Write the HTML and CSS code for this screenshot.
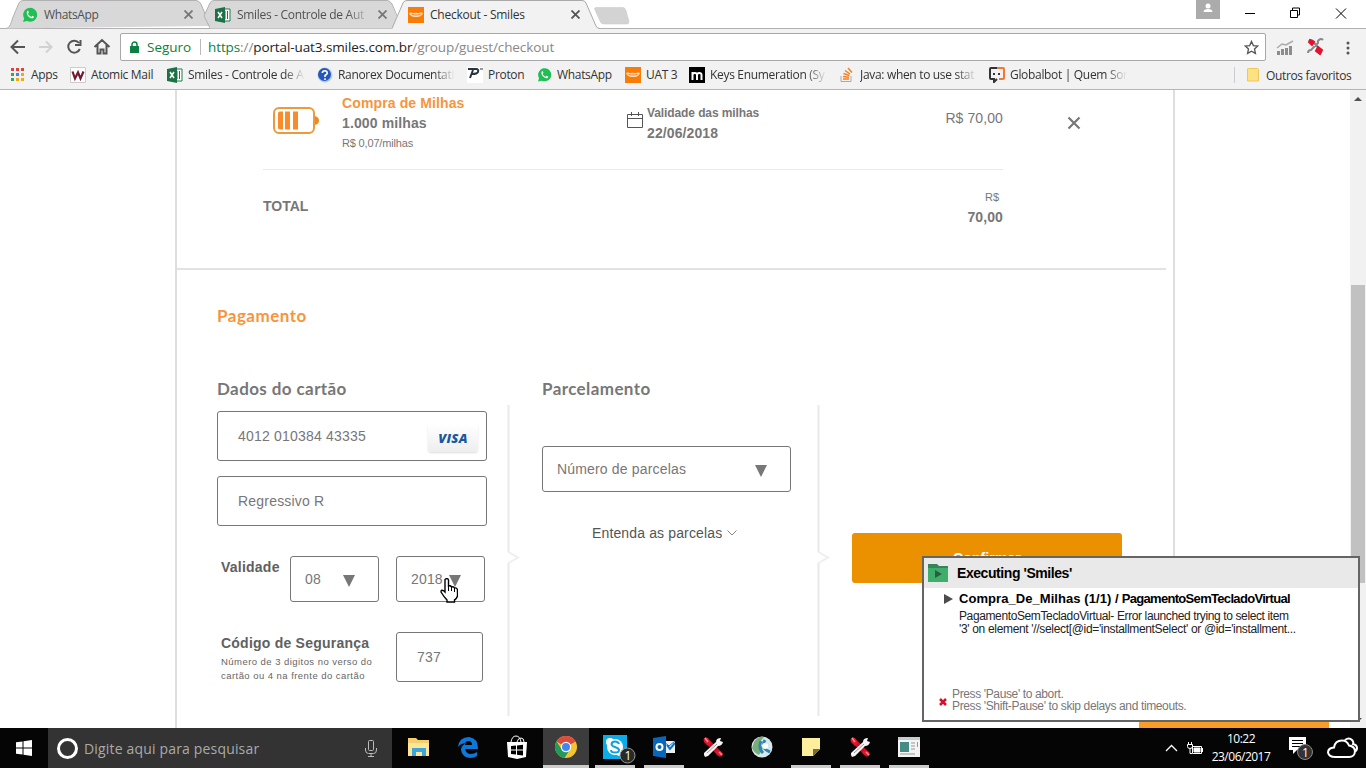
FILE: index.html
```html
<!DOCTYPE html>
<html lang="pt-BR">
<head>
<meta charset="utf-8">
<title>Checkout - Smiles</title>
<link rel="stylesheet" href="styles.css">
</head>
<body>
<svg width="0" height="0" class="defs">
  <symbol id="whats" viewBox="0 0 16 16"><path d="M1 15l1.200-3.600A7 7 0 1 1 5 14z" fill="#20bf55"/><path d="M5.100 4.200c.7-.7 1.300-.3 1.700 1.300L6 6.800C6.700 8.300 7.700 9.200 9.200 9.900l1.100-1.100c1.800.6 2 1.100 1.200 2C9.300 13 3.300 8 5.100 4.200z" fill="#fff"/></symbol>
  <symbol id="excel" viewBox="0 0 16 16"><path d="M8 2h7v12H8z" fill="#fff" stroke="#207a4b"/><path d="M10 4v8M12.500 4v8" stroke="#207a4b"/><path d="M0 2l10-2v16L0 14z" fill="#1d7245"/><path d="M3 5l4 6M7 5l-4 6" stroke="#fff" stroke-width="1.500"/></symbol>
  <symbol id="smile" viewBox="0 0 16 16"><path d="M0 0h16v16H0z" fill="#f97b08"/><path d="M1 6c2-1.500 3.500.5 5 0s2-.5 3.500 0S13 4.500 15 6c-1 2.500-2.500 4-7 4S2 8.500 1 6z" fill="#ffdcb5"/><path d="M3.500 7.300c3 1 6 1 9 0" stroke="#f58a2b" fill="none"/></symbol>
  <symbol id="folder" viewBox="0 0 22 20"><path d="M0 1h8l2 2h11v16H0z" fill="#f5cf6b"/><path d="M0 6h21v13H0z" fill="#ffe596"/><path d="M4 19v-8h14v8h-4v-4H8v4z" fill="#39a5dd"/></symbol>
  <symbol id="ranorex" viewBox="0 0 22 22"><path d="M4 4l14 14" stroke="#cf0c22" stroke-width="5" stroke-linecap="round"/><path d="M2 3q1-2 4-1l3 5-3 3-4-4zM16 14l4 2q2 3-1 4l-4-1-2-3z" fill="#e3152c"/><path d="M3 2l3 4M17 16l3 3" stroke="#ff8a93" stroke-width="1.500"/><path d="M2 17L14 6q0-4 5-4l-1 3 3 1q-1 4-5 4L6 20l-3 1-1-2z" fill="#f4f4f4"/><path d="M5 17L15 8" stroke="#999"/></symbol>
</svg>

<div class="screen">
  <header class="tabs">
    <div class="tab t1"><svg class="shape" width="206" height="29"><path d="M0 28.500C4 28 5 23 7 17L13 3Q14 .5 17 .5H190Q193 .5 195 4L204 26" fill="#d8d8d8" stroke="#b1b1b1"/></svg><svg width="16" height="16"><use href="#whats"/></svg><span class="name">WhatsApp</span><svg class="x" width="9" height="9"><path d="M.5.5l8 8M8.500.5l-8 8"/></svg></div>
    <div class="tab t2"><svg class="shape" width="206" height="29"><path d="M1 16L7 3Q8 .5 11 .5H184Q187 .5 189 4L198 28.500H8z" fill="#d8d8d8"/><path d="M1 16L7 3Q8 .5 11 .5H184Q187 .5 189 4L195 18M1 16L7 28" fill="none" stroke="#b1b1b1"/></svg><svg width="16" height="16"><use href="#excel"/></svg><span class="name fade">Smiles - Controle de Aut</span><svg class="x" width="9" height="9"><path d="M.5.5l8 8M8.500.5l-8 8"/></svg></div>
    <div class="tab t3"><svg class="shape" width="208" height="30"><path d="M0 29V28.500L11 3Q12 .5 15 .5H190Q193 .5 194 3L204 26Q205 28.500 208 28.500V30H0z" fill="#f2f2f2"/><path d="M0 28.500L11 3Q12 .5 15 .5H190Q193 .5 194 3L204 26Q205 28.500 208 28.500" fill="none" stroke="#a9a9a9"/></svg><svg width="16" height="16"><use href="#smile"/></svg><span class="name">Checkout - Smiles</span><svg class="x dark" width="9" height="9"><path d="M.5.5l8 8M8.500.5l-8 8"/></svg></div>
    <svg class="newtab" width="36" height="18"><path d="M2 .5h27q2 0 3 3l3 11q0 2.500-2 2.500H10q-3 0-4-3L1 3Q0 .5 2 .5z" fill="#d3d3d3" stroke="#c6c6c6" stroke-width=".5"/></svg>
    <div class="winctl"><svg class="person" width="24" height="19"><path d="M0 0h24v19H0z" fill="#ababab"/><circle cx="12" cy="6" r="2.500" fill="#fff"/><path d="M7.500 12q0-3 4.500-3t4.500 3z" fill="#fff"/></svg><svg width="120" height="28" fill="none" stroke="#000"><path d="M13 13.500h10M58.500 10.500h7v7h-7zM60.500 10v-2h7v7h-2M104 8.500l10 10M114 8.500l-10 10"/></svg></div>
  </header>

  <div class="toolbar">
    <svg width="120" height="34" fill="none" stroke="#555" stroke-width="2"><path d="M25 18H12M18 11.500L11.500 18l6.500 6.500"/><path d="M39 18h12M46 12.500l5.500 5.500-5.500 5.500" stroke="#d2d2d2"/><path d="M79 14A6 6 0 1 0 79.800 20M80.500 11v5h-5.500"/><path d="M94.500 18L102 11l7.500 7M97.500 16v8.500h3v-4h3v4h3V16"/></svg>
    <div class="omnibox"><svg width="10" height="13"><path d="M0 5h9v7H0z" fill="#0b8043"/><path d="M2 6V3.500a2.500 2.500 0 0 1 5 0V6" fill="none" stroke="#0b8043" stroke-width="1.500"/></svg><span class="secure">Seguro</span><i></i><span class="url"><b class="g">https</b><b>://</b>portal-uat3.smiles.com.br<b>/group/guest/checkout</b></span><svg class="star" width="15" height="15" viewBox="0 0 16 16"><path d="M8 1.500l2 4.400 4.700.5-3.500 3.200 1 4.700L8 11.900l-4.200 2.400 1-4.700L1.300 6.400 6 5.900z" fill="none" stroke="#555" stroke-width="1.400"/></svg></div>
    <svg class="ext" width="100" height="32"><path d="M11 26v-4h3v4zM15 26v-6h3v6zM19 26v-7h3v7zM23 26v-9h3v9z" fill="#8d8d8d"/><path d="M11 19l5-4 4 1 7-4" fill="none" stroke="#aaa" stroke-width="1.500"/><g transform="translate(3 1)"><path d="M40 11a3 3 0 0 1 5 2l7 7a3 3 0 0 1-2 4M54 10a3 3 0 0 0-5 3l-7 7a3 3 0 0 0-3 3" fill="none" stroke="#888" stroke-width="2"/><path d="M41 10l4 2-2 3-3-3zM49 17l4 3-2 4-4-3z" stroke="#e2132c" stroke-width="2" fill="#e2132c"/></g><circle cx="82" cy="14" r="1.500"/><circle cx="82" cy="19" r="1.500"/><circle cx="82" cy="24" r="1.500"/></svg>
  </div>

  <nav class="bookmarks">
    <div><svg width="16" height="16"><path d="M1 1h3v3H1zM6 1h3v3H6zM11 1h3v3h-3z" fill="#db4437"/><path d="M1 6h3v3H1z" fill="#3aa757"/><path d="M6 6h3v3H6z" fill="#4285f4"/><path d="M11 6h3v3h-3zM6 11h3v3H6zM11 11h3v3h-3z" fill="#f2a813"/><path d="M1 11h3v3H1z" fill="#3aa757"/></svg><span>Apps</span></div>
    <div><svg width="16" height="16"><path d="M.5.5h15v15H.5z" fill="#fff" stroke="#ccc"/><path d="M2.500 4.500l2.500 7 3-6 2.500 6 3-7" fill="none" stroke="#741a30" stroke-width="2.200"/></svg><span>Atomic Mail</span></div>
    <div><svg width="16" height="16"><use href="#excel"/></svg><span class="fade">Smiles - Controle de A</span></div>
    <div><svg width="16" height="16"><circle cx="8" cy="8" r="7.500" fill="#b6cbe8"/><circle cx="7.500" cy="7.500" r="6.500" fill="#2558bd"/><path d="M5.300 6q.2-2.300 2.500-2.300T10.300 6q0 1.200-2.300 2.500v1.500M8 11.300v1.700" stroke="#fff" fill="none" stroke-width="1.600"/></svg><span class="fade">Ranorex Documentati</span></div>
    <div><svg width="16" height="16"><path d="M0 0h16v16H0z" fill="#fff"/><path d="M1 2h8q3 0 2 3-1 2-6 2M6 3L3 11" fill="none" stroke="#29323e" stroke-width="2"/><path d="M13 2h3" stroke="#29323e"/></svg><span>Proton</span></div>
    <div><svg width="15" height="16"><use href="#whats"/></svg><span>WhatsApp</span></div>
    <div><svg width="16" height="16"><use href="#smile"/></svg><span>UAT 3</span></div>
    <div><svg width="16" height="16"><path d="M0 0h16v16H0z"/><path d="M3.500 13V5M3.500 8q0-2 2.300-2T8 8v5M8 8q0-2 2.300-2t2.200 2v5" stroke="#fff" stroke-width="2" fill="none"/></svg><span class="fade">Keys Enumeration (Sy</span></div>
    <div><svg width="16" height="16" fill="none"><path d="M2 9v5.500h10V9" stroke="#aaa"/><path d="M4 12h6M4 9.500l6 .7M4.500 6.500l6 2M6 3.500l5 3.500M9 1l4 4.500" stroke="#f48024" stroke-width="1.500"/></svg><span class="fade">Java: when to use stat</span></div>
    <div><svg width="16" height="16" fill="none" stroke-width="2"><path d="M8 1H2q-1 0-1 1v9q0 1 1 1h3v3l3-3" stroke="#333"/><path d="M8 1h6q1 0 1 1v9q0 1-1 1h-4" stroke="#ef7935"/><path d="M4 7h2M9 7h2" stroke="#334"/></svg><span class="fade">Globalbot | Quem Son</span></div>
    <div class="other"><svg width="12" height="14"><path d="M.5 1q0-.5 1-.5h9q1 0 1 1V13H.5z" fill="#fde182" stroke="#edc75a"/></svg><span>Outros favoritos</span></div>
  </nav>

  <main class="viewport">
    <div class="page">
      <section class="product">
        <svg class="battery" width="46" height="28"><rect x="1" y="1" width="40" height="25" rx="5" fill="none" stroke="#ed9a3a" stroke-width="2"/><path d="M42 9q4 1 4 4.500T42 18z" fill="#ed8b1c"/><path d="M7 4.500h3v18H7q-2 0-2-2v-14q0-2 2-2zM12 4.500h5v18h-5zM20 4.500h5v18h-5z" fill="#f98b2b"/></svg>
        <div class="info"><strong class="orange">Compra de Milhas</strong><strong>1.000 milhas</strong><small>R$ 0,07/milhas</small></div>
        <div class="date"><svg width="16" height="18" fill="none" stroke="#555"><path d="M.5 3.500h15v13H.5zM.5 7.500h15M4.500 1v4M11.500 1v4"/></svg><div><b>Validade das milhas</b><strong>22/06/2018</strong></div></div>
        <span class="price">R$ 70,00</span>
        <svg class="remove" width="14" height="14"><path d="M1.500 1.500l11 11M12.500 1.500l-11 11" stroke="#777" stroke-width="2.200"/></svg>
      </section>
      <section class="total"><strong>TOTAL</strong><div><small>R$</small><b>70,00</b></div></section>
      <section class="payment">
        <h2>Pagamento</h2>
        <div class="columns">
          <div class="carddata">
            <h3>Dados do cartão</h3>
            <div class="field">4012 010384 43335<span class="visa">VISA</span></div>
            <div class="field">Regressivo R</div>
            <div class="validity"><label>Validade</label><div class="select">08<i class="arrow"></i></div><div class="select">2018<i class="arrow"></i></div></div>
            <div class="security"><div><label>Código de Segurança</label><p>Número de 3 digitos no verso do<br>cartão ou 4 na frente do cartão</p></div><div class="field code">737</div></div>
          </div>
          <svg class="split" width="14" height="312" fill="none"><path d="M1.500 0v147M1.500 158v153" stroke="#e9e9e9" stroke-width="2"/><path d="M1.500 147l9.500 5.500-9.500 5.500" stroke="#eee" stroke-width="2"/></svg>
          <div class="installments"><h3>Parcelamento</h3><div class="select wide">Número de parcelas<i class="arrow"></i></div><p>Entenda as parcelas <svg width="10" height="6"><path d="M.5.5L5 5 9.500.5" fill="none" stroke="#888"/></svg></p></div>
          <svg class="split" width="14" height="312" fill="none"><path d="M1.500 0v147M1.500 158v153" stroke="#e9e9e9" stroke-width="2"/><path d="M1.500 147l9.500 5.500-9.500 5.500" stroke="#eee" stroke-width="2"/></svg>
          <button class="confirm">Confirmar</button>
        </div>
      </section>
    </div>
    <div class="scroll"><svg width="16" height="16"><path d="M4 11l4-4 4 4z" fill="#505050"/></svg><i class="thumb"></i><svg width="16" height="16"><path d="M4 6l4 4 4-4z" fill="#505050"/></svg></div>
  </main>

  <footer class="taskbar">
    <svg class="start" width="16" height="16"><path d="M0 2.300L6.500 1.400V7.500H0zM7.500 1.200L16 0v7.500H7.500zM0 8.500h6.500v6.100L0 13.700zM7.500 8.500H16V16l-8.500-1.200z" fill="#fff"/></svg>
    <div class="search"><i></i><span>Digite aqui para pesquisar</span><svg width="12" height="17" fill="none" stroke="#bbb"><rect x="3.500" y=".5" width="5" height="10" rx="1"/><path d="M.5 8v2q0 3.500 3 3.500h5q3 0 3-3.500V8M6 13.500V16M3 16.500h6"/></svg></div>
    <div class="apps">
      <div><svg width="22" height="20"><use href="#folder"/></svg></div>
      <div><svg width="22" height="22"><path d="M1 11Q2 1 12 1q9 1 9 12H8q1 5 6 5 3 0 6-2v4q-3 2-7 2-8-1-9-8 0-5 6-7-6 0-9 4zM8 9h7q0-4-3.500-4T8 9z" fill="#0d78d6"/></svg></div>
      <div><svg width="22" height="24"><path d="M1 7h20l-1 15-9 2-9-2z" fill="#fff"/><path d="M5 7q1-6 5-6t5 6M11 7q1-4 4-4t3 4" fill="none" stroke="#fff"/><path d="M5 11l5-.5v4H5zM11 10.400l6-.6v4.700h-6zM5 15.500h5v4l-5-.5zM11 15.500h6v5l-6-.7z"/></svg></div>
      <div class="on active"><svg width="22" height="22" viewBox="0 0 22 22"><circle cx="11" cy="11" r="11" fill="#f4c430"/><path d="M11 11L1.500 5.500A11 11 0 0 1 20.500 5.500z" fill="#dd4b3e"/><path d="M1.500 5.500A11 11 0 0 0 9.500 22L15 13.500 11 11 6.500 13z" fill="#24995b"/><path d="M11 5.500h9.500L15 8z" fill="#dd4b3e"/><circle cx="11" cy="11" r="5.200" fill="#fff"/><circle cx="11" cy="11" r="4" fill="#4285f4"/></svg></div>
      <div class="on"><svg width="33" height="29" class="skype"><path d="M0 0h24v24H0z" fill="#0caceb"/><circle cx="12" cy="12" r="8" fill="#fff"/><circle cx="7" cy="7" r="4" fill="#fff"/><circle cx="17" cy="17" r="4" fill="#fff"/><path d="M16 9q-1-2.500-4-2.500T8.500 9Q8.500 11 12 12t4 3q0 2.500-4 2.500T8 15" fill="none" stroke="#139fd9" stroke-width="2"/><circle cx="24.500" cy="20.500" r="7.500" fill="#292929" stroke="#999"/><text x="21.500" y="25" fill="#fff" font-size="12">1</text></svg></div>
      <div class="on"><svg width="22" height="22"><path d="M10 5h12v12H10z" fill="#eee"/><path d="M10 5l6 5 6-5" stroke="#0873c9" fill="none"/><path d="M14 9l3 4 5-6" stroke="#0873c9" stroke-width="2" fill="none"/><path d="M0 2l13-2v22L0 20z" fill="#0768bb"/><circle cx="6.500" cy="11" r="3" stroke="#fff" stroke-width="2" fill="none"/></svg></div>
      <div><svg width="22" height="22"><use href="#ranorex"/></svg></div>
      <div><svg width="22" height="22"><circle cx="11" cy="11" r="10.500" fill="#d8e7eb"/><path d="M3 6q4-6 10-5L8 7l4 5-4 7q-5-2-7-7z" fill="#79ad78"/><path d="M10 5q-3 7 2 12M14 4q-5 8 5 12" stroke="#3184b8" stroke-width="3" fill="none"/><circle cx="14" cy="10" r="3" fill="#fff"/></svg></div>
      <div class="on"><svg width="18" height="20"><path d="M0 1h18v11l-7 7H0z" fill="#ffef9c"/><path d="M11 12h7l-7 7z" fill="#776c39"/></svg></div>
      <div class="on"><svg width="22" height="22"><use href="#ranorex"/></svg></div>
      <div class="on"><svg width="22" height="20"><path d="M0 0h22v20H0z" fill="#f4f4f4"/><path d="M0 0h22v3H0z" fill="#c4cdd0"/><path d="M2 5h9v10H2z" fill="#438b83"/><path d="M13 6h4M13 9h4M13 12h4M2 17h15M19.500 5v5" stroke="#999"/></svg></div>
    </div>
    <div class="tray"><svg width="13" height="8"><path d="M1 7l5.500-5.500L12 7" fill="none" stroke="#fff" stroke-width="1.300"/></svg><svg class="power" width="16" height="13" fill="none" stroke="#fff"><path d="M5.500 4.500h9v7h-9zM15.500 6v4M.5 2.500h5v2q0 2-2.500 2t-2.500-2zM1.500 0v2M4.500 0v2M3 7v4.500h2"/><path d="M7 6h6v4H7z" fill="#fff"/></svg><div class="clock">10:22<br>23/06/2017</div><svg class="note" width="26" height="24"><path d="M0 1h17v13H8l-4 4v-4H0z" fill="#fff"/><path d="M3 4.500h11M3 7.500h11M3 10.500h8" stroke="#000"/><circle cx="16" cy="16" r="7.500" fill="#333" stroke="#888"/><text x="13" y="20.500" fill="#fff" font-size="12">1</text></svg><svg width="32" height="22" fill="none" stroke="#fff" stroke-width="2"><path d="M8 20q-6 0-7-4.500Q1 11 7 10.500q1-7 8-7 5 0 7 5 6 1 6 6-.5 5.500-6 5.500zM18 3q4-3 7 0 2 2 1 4 4 1 4 4 0 3-3 4"/></svg></div>
  </footer>

  <div class="nextbar"></div>
  <svg class="cursor" width="18" height="25" viewBox="0 0 18 25"><path d="M5 1.500Q7.500-.5 8.500 2v6q2-1 3 1 2-1 3 1 2.500-.5 3 2v6q-1 3-3 4v2H7v-2Q4 19 1 14q0-3 3-1l1 1z" fill="#fff" stroke="#000" stroke-width="1.400"/><path d="M8.500 8v5M11.500 9v4M14.500 10v4" stroke="#000"/></svg>
  <aside class="popup">
    <div class="ptitle"><svg width="20" height="18"><path d="M0 0h9l2 2h9v16H0z" fill="#38845a"/><path d="M0 4h20v14H0z" fill="#3fae6b"/><path d="M7 6l7 4-7 4z" fill="#2d5c42"/></svg><strong>Executing 'Smiles'</strong></div>
    <div class="pbody"><svg width="9" height="10"><path d="M0 0l9 5-9 5z" fill="#4c4c4c"/></svg><div><h4><span>Compra_De_Milhas (1/1) /</span> <em>PagamentoSemTecladoVirtual</em></h4><p>PagamentoSemTecladoVirtual- Error launched trying to select item<br><span>'3' on element '//select[@id='installmentSelect' or @id='installment...</span></p></div></div>
    <div class="pfoot"><svg width="8" height="8"><path d="M1 1l6 6M7 1L1 7" stroke="#d60f2a" stroke-width="2.500"/></svg><p>Press 'Pause' to abort.<br><span>Press 'Shift-Pause' to skip delays and timeouts.</span></p></div>
  </aside>
</div>
</body>
</html>
```
FILE: styles.css
```css
* { box-sizing: border-box; }
body { margin: 0; background: #fff; }
svg { display: block; flex: none; }
i { display: block; }
h2, h3, h4, p { margin: 0; }
.defs { position: absolute; }
.screen { position: relative; width: 1366px; height: 768px; overflow: hidden; display: flex; flex-direction: column; font: 12px "Open Sans", sans-serif; white-space: nowrap; }
.screen > * { flex: none; }

.tabs { height: 29px; display: flex; border-bottom: 1px solid #b1b1b1; }
.tab { position: relative; display: flex; align-items: center; height: 29px; color: #505050; letter-spacing: -.35px; }
.tab > * { position: relative; }
.tab .shape { position: absolute; left: 0; top: 0; }
.t1 { width: 197px; margin-left: 6px; padding-left: 16px; }
.t2 { width: 189px; padding-left: 12px; }
.t3 { width: 202px; padding-left: 16px; color: #333; z-index: 1; letter-spacing: -.25px; }
.name { margin-left: 6px; width: 141px; }
.t2 .name { width: 134px; margin-left: 6px; letter-spacing: -.3px; }
.t2 .x { margin-left: 7px; }
.fade { -webkit-mask-image: linear-gradient(90deg, #000 82%, transparent); mask-image: linear-gradient(90deg, #000 82%, transparent); }
.x { stroke: #777; stroke-width: 1.8; fill: none; }
.t1 .x { margin-left: -1px; }
.dark { stroke: #555; }
.newtab { margin: 7px 0 0; }
.winctl { display: flex; margin-left: auto; width: 170px; }
.person { margin-right: 12px; }

.toolbar { height: 33px; background: #f2f2f2; display: flex; }
.omnibox { width: 1146px; height: 28px; margin-top: 4px; border: 1px solid #a8a8a8; border-radius: 2px; background: #fff; display: flex; align-items: center; padding-left: 9px; font-size: 13.500px; }
.secure { margin-left: 7px; color: #0b8043; width: 46px; }
.omnibox i { width: 1px; height: 16px; background: #bbb; margin: 0 7px 0 7px; }
.url { color: #222; letter-spacing: -.1px; }
.url b { font-weight: 400; color: #888; }
.url .g { color: #0b8043; }
.star { margin-left: auto; margin-right: 6px; }
.ext { fill: #555; }

.bookmarks { height: 28px; background: #f2f2f2; border-bottom: 1px solid #b5b5b5; display: grid; grid-template-columns: 60px 97px 150px 150px 70px 88px 64px 150px 150px 245px 120px; padding-left: 10px; color: #333; letter-spacing: -.32px; }
.bookmarks > div { display: flex; align-items: center; gap: 5px; padding-bottom: 2px; }
.bookmarks .fade { width: 117px; }
.bookmarks .other { border-left: 1px solid #c6cbd5; gap: 7px; padding: 0 0 0 12px; height: 16px; margin-top: 5px; letter-spacing: -.35px; }

.viewport { height: 638px; display: flex; font-family: "Liberation Sans", Arial, sans-serif; color: #777; }
.page { margin-left: 175px; width: 1000px; border: solid #dedede; border-width: 0 2px; }
.product { height: 80px; width: 740px; margin-left: 86px; border-bottom: 1px solid #e9e9e9; display: flex; font-size: 14px; }
.battery { margin: 17px 23px 0 10px; }
.info { width: 285px; padding-top: 3px; }
.info > *, .date strong, .date b { display: block; line-height: 20px; }
.info strong { letter-spacing: .12px; }
.info .orange { color: #f6953d; }
small { font-size: 11px; }
.info small { letter-spacing: -.17px; }
.date { display: flex; gap: 4px; padding-top: 13px; width: 200px; margin-right: auto; }
.date svg { margin-top: 8px; }
.date b { font-size: 12px; letter-spacing: -.1px; }
.date strong { font-size: 14px; letter-spacing: .1px; }
.price { margin-top: 20px; margin-left: auto; letter-spacing: .1px; }
.remove { margin: 26px -78px 0 64px; }
.total { height: 100px; width: 989px; border-bottom: 2px solid #e2e2e2; padding: 17px 163px 0 86px; display: flex; justify-content: space-between; font-size: 14px; }
.total strong { line-height: 20px; margin-top: 9px; }
.total div { text-align: right; line-height: 20px; }
.total small { display: block; padding-right: 4px; }
.total b { font-size: 14px; letter-spacing: .1px; }

.payment { padding: 34px 0 0 40px; }
h2, h3 { font: 700 17px/24px Lato, sans-serif; letter-spacing: .4px; }
h2 { color: #f6953d; margin-bottom: 49px; letter-spacing: .5px; }
.columns { display: flex; }
.carddata { width: 290px; }
.field { width: 270px; height: 50px; border: 1px solid #777; border-radius: 3px; display: flex; align-items: center; justify-content: space-between; padding: 0 8px 0 20px; font-size: 14px; letter-spacing: .2px; margin-bottom: 15px; }
.carddata h3 { margin-bottom: 10px; }
.visa { width: 50px; height: 28px; margin-top: 3px; background: linear-gradient(#fff, #eee); box-shadow: 0 1px 2px #ddd; border-radius: 3px; font: italic 800 13px/28px "Open Sans", sans-serif; color: #1b579f; text-align: center; }
.validity { display: flex; padding: 15px 0 0 4px; }
label { font-size: 14px; font-weight: 700; color: #606060; letter-spacing: .23px; }
.validity label { width: 69px; padding-top: 3px; }
.select { width: 89px; height: 46px; border: 1px solid #777; border-radius: 3px; padding-left: 14px; line-height: 44px; font-size: 14px; letter-spacing: .17px; display: flex; align-items: center; }
.select + .select { margin-left: 17px; }
.arrow { border: solid transparent; border-width: 12px 6.500px 0; border-top-color: #777; margin: 3px 23.500px 0 auto; }
.security { display: flex; padding: 30px 0 0 4px; }
.security > div:first-child { width: 175px; padding-top: 3px; }
.security p { font-size: 9.500px; line-height: 14px; letter-spacing: .45px; margin-top: 4px; color: #666; }
.code { width: 87px; margin: 0; }
.split { margin-top: 28px; }
.installments { width: 296px; padding-left: 21px; }
.wide { width: 249px; margin-top: 45px; }
.installments p { font-size: 14px; letter-spacing: .14px; color: #555; margin: 33px 0 0 50px; display: flex; align-items: center; gap: 5px; }
.confirm { width: 270px; height: 50px; margin: 156px 0 0 21px; background: #eb9100; border: 0; border-radius: 3px; color: #fff; font: 700 14px "Liberation Sans", sans-serif; letter-spacing: .1px; }
.scroll { width: 16px; margin-left: 175px; background: #f1f1f1; display: flex; flex-direction: column; }
.thumb { width: 14px; margin: 179px 1px auto; height: 298px; background: #c1c1c1; }

.taskbar { height: 40px; background: #050505; display: flex; align-items: center; }
.start { margin: 0 16px; }
.search { width: 344px; height: 40px; background: #333; display: flex; align-items: center; padding: 0 15px 0 9px; color: #aaa; font-size: 14px; }
.search i { width: 21px; height: 21px; border: 3px solid #fff; border-radius: 50%; }
.search span { margin: 0 auto 0 6px; letter-spacing: .17px; }
.apps { height: 40px; display: grid; grid-template-columns: repeat(11, 40px); column-gap: 9px; padding-left: 7px; }
.apps div { display: flex; align-items: center; justify-content: center; border-bottom: 3px solid transparent; }
.apps .on { border-bottom-color: #ccc; }
.apps .active { background: #3c3c3c; width: 46px; margin-left: -3px; }
.skype { margin-top: 5px; margin-left: 9px; }
.tray { margin-left: auto; display: flex; align-items: center; color: #fff; padding-right: 7px; }
.power { margin-left: 9px; }
.clock { width: 72px; margin-left: 2px; text-align: center; font-size: 12px; line-height: 18px; letter-spacing: -.5px; }
.note { margin: 0 12px; }

.nextbar { position: absolute; left: 1139px; top: 721px; width: 190px; height: 7px; background: #fa9c28; }
.cursor { position: absolute; left: 440px; top: 578px; }
.popup { position: absolute; left: 922px; top: 556px; width: 438px; height: 166px; border: 2px solid #656565; background: #fff; font: 12px "Liberation Sans", sans-serif; color: #000; }
.ptitle { height: 30px; background: #e9e9e9; display: flex; align-items: center; padding: 0 0 1px 4px; gap: 9px; font-size: 14px; letter-spacing: -.43px; }
.pbody { height: 100px; display: flex; padding: 3px 0 0 20px; gap: 6px; }
.pbody > svg { margin-top: 3px; }
h4 { font-size: 13px; line-height: 16px; margin-bottom: 3px; display: flex; gap: 3px; }
h4 span { letter-spacing: .06px; }
h4 em { font-style: normal; letter-spacing: -.68px; }
.pbody p { line-height: 13px; letter-spacing: -.38px; color: #222; }
.pbody p span { letter-spacing: -.33px; }
.pfoot { display: flex; padding-left: 15px; gap: 5px; color: #777; }
.pfoot svg { margin-top: 10px; }
.pfoot p { line-height: 12px; letter-spacing: -.37px; }
```
